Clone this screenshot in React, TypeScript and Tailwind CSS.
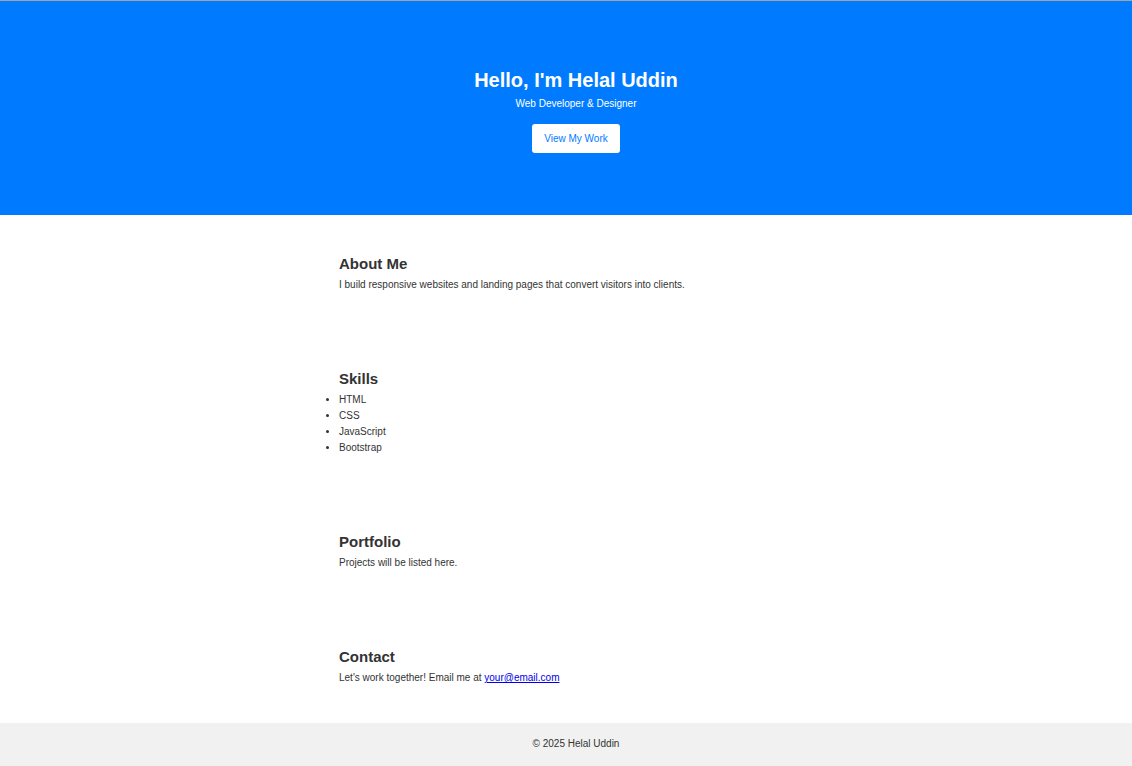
const skills = ['HTML', 'CSS', 'JavaScript', 'Bootstrap'];

function Section({ title, children }: { title: string; children: React.ReactNode }) {
  return (
    <section className="pt-[40px] pb-[37px]">
      <div className="mx-auto w-[474px]">
        <h2 className="mb-[4px] text-[15px] font-bold leading-[18px] text-[#333]">{title}</h2>
        {children}
      </div>
    </section>
  );
}

export default function App() {
  return (
    <div
      className="min-h-[766px] bg-white text-[10px] leading-[16px] text-[#333]"
      style={{ fontFamily: '"Liberation Sans", Arial, sans-serif' }}
    >
      <header className="flex h-[215px] flex-col items-center border-t border-[#a3a3a3] bg-[#007bff] pl-[20px] pt-[67px] text-white">
        <h1 className="text-[20px] font-bold leading-[24px]">Hello, I'm Helal Uddin</h1>
        <p className="mt-[4px] text-[10px] leading-[16px]">Web Developer &amp; Designer</p>
        <a
          href="#portfolio"
          className="mt-[12px] flex h-[29px] w-[88px] items-center justify-center rounded-[3px] bg-white text-[10px] text-[#007bff]"
        >
          View My Work
        </a>
      </header>

      <main className="pl-[20px]">
        <Section title="About Me">
          <p>I build responsive websites and landing pages that convert visitors into clients.</p>
        </Section>

        <Section title="Skills">
          <ul className="list-disc pl-0 list-outside">
            {skills.map((s) => (
              <li key={s} className="leading-[16px]">
                {s}
              </li>
            ))}
          </ul>
        </Section>

        <Section title="Portfolio">
          <p>Projects will be listed here.</p>
        </Section>

        <Section title="Contact">
          <p>
            Let's work together! Email me at{' '}
            <a href="mailto:your@email.com" className="text-[#0000ee] underline">
              your@email.com
            </a>
          </p>
        </Section>
      </main>

      <footer className="flex h-[43px] justify-center bg-[#f1f1f1] pl-[20px] pt-[13px] text-[10px]">
        © 2025 Helal Uddin
      </footer>
    </div>
  );
}
